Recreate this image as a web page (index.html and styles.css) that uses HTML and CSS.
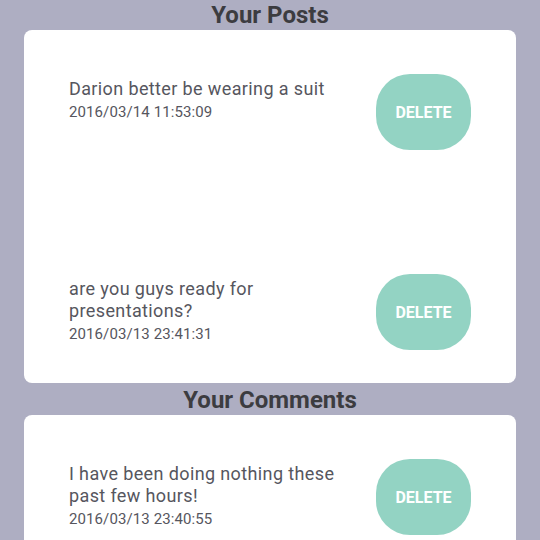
FILE: index.html
```html
<!DOCTYPE html>
<html>
<head>
<meta charset="utf-8">
<link rel="stylesheet" href="styles.css">
</head>
<body>
<div class="page">
  <section class="section">
    <h2 class="section-title">Your Posts</h2>
    <div class="card">
      <div class="item">
        <div class="item-text">
          <div class="item-body">Darion better be wearing a suit</div>
          <div class="item-date">2016/03/14 11:53:09</div>
        </div>
        <button class="delete-btn">DELETE</button>
      </div>
      <div class="item">
        <div class="item-text">
          <div class="item-body">are you guys ready for presentations?</div>
          <div class="item-date">2016/03/13 23:41:31</div>
        </div>
        <button class="delete-btn">DELETE</button>
      </div>
    </div>
  </section>
  <section class="section">
    <h2 class="section-title">Your Comments</h2>
    <div class="card">
      <div class="item">
        <div class="item-text">
          <div class="item-body">I have been doing nothing these past few hours!</div>
          <div class="item-date">2016/03/13 23:40:55</div>
        </div>
        <button class="delete-btn">DELETE</button>
      </div>
    </div>
  </section>
</div>
</body>
</html>
```

FILE: styles.css
```css
* { box-sizing: border-box; }
html, body {
  margin: 0;
  padding: 0;
  height: 100%;
  overflow: hidden;
}
body {
  background: #aeaec2;
  font-family: Roboto, "Liberation Sans", sans-serif;
}
.page {
  margin-top: -2px;
  padding: 0 24px;
}
.section-title {
  margin: 0;
  padding-top: 2px;
  height: 32px;
  line-height: 30px;
  font-size: 24px;
  font-weight: 700;
  color: #3c3c40;
  text-align: center;
}
.card {
  background: #ffffff;
  border-radius: 8px;
  padding: 44px 45px 33px 45px;
  display: flex;
  flex-direction: column;
  gap: 124px;
}
.item {
  display: flex;
  align-items: flex-start;
  gap: 30px;
}
.item-text {
  flex: 1;
  margin-top: 4px;
  color: #56565e;
}
.item-body {
  font-size: 18px;
  line-height: 22px;
  letter-spacing: 0.38px;
}
.item-date {
  font-size: 15px;
  line-height: 24px;
  letter-spacing: 0.1px;
}
.delete-btn {
  flex: none;
  width: 95px;
  height: 76px;
  border: none;
  border-radius: 34px;
  background: #93d3c3;
  color: #ffffff;
  font-family: Roboto, "Liberation Sans", sans-serif;
  font-size: 16px;
  font-weight: 700;
  padding: 0;
}
```
